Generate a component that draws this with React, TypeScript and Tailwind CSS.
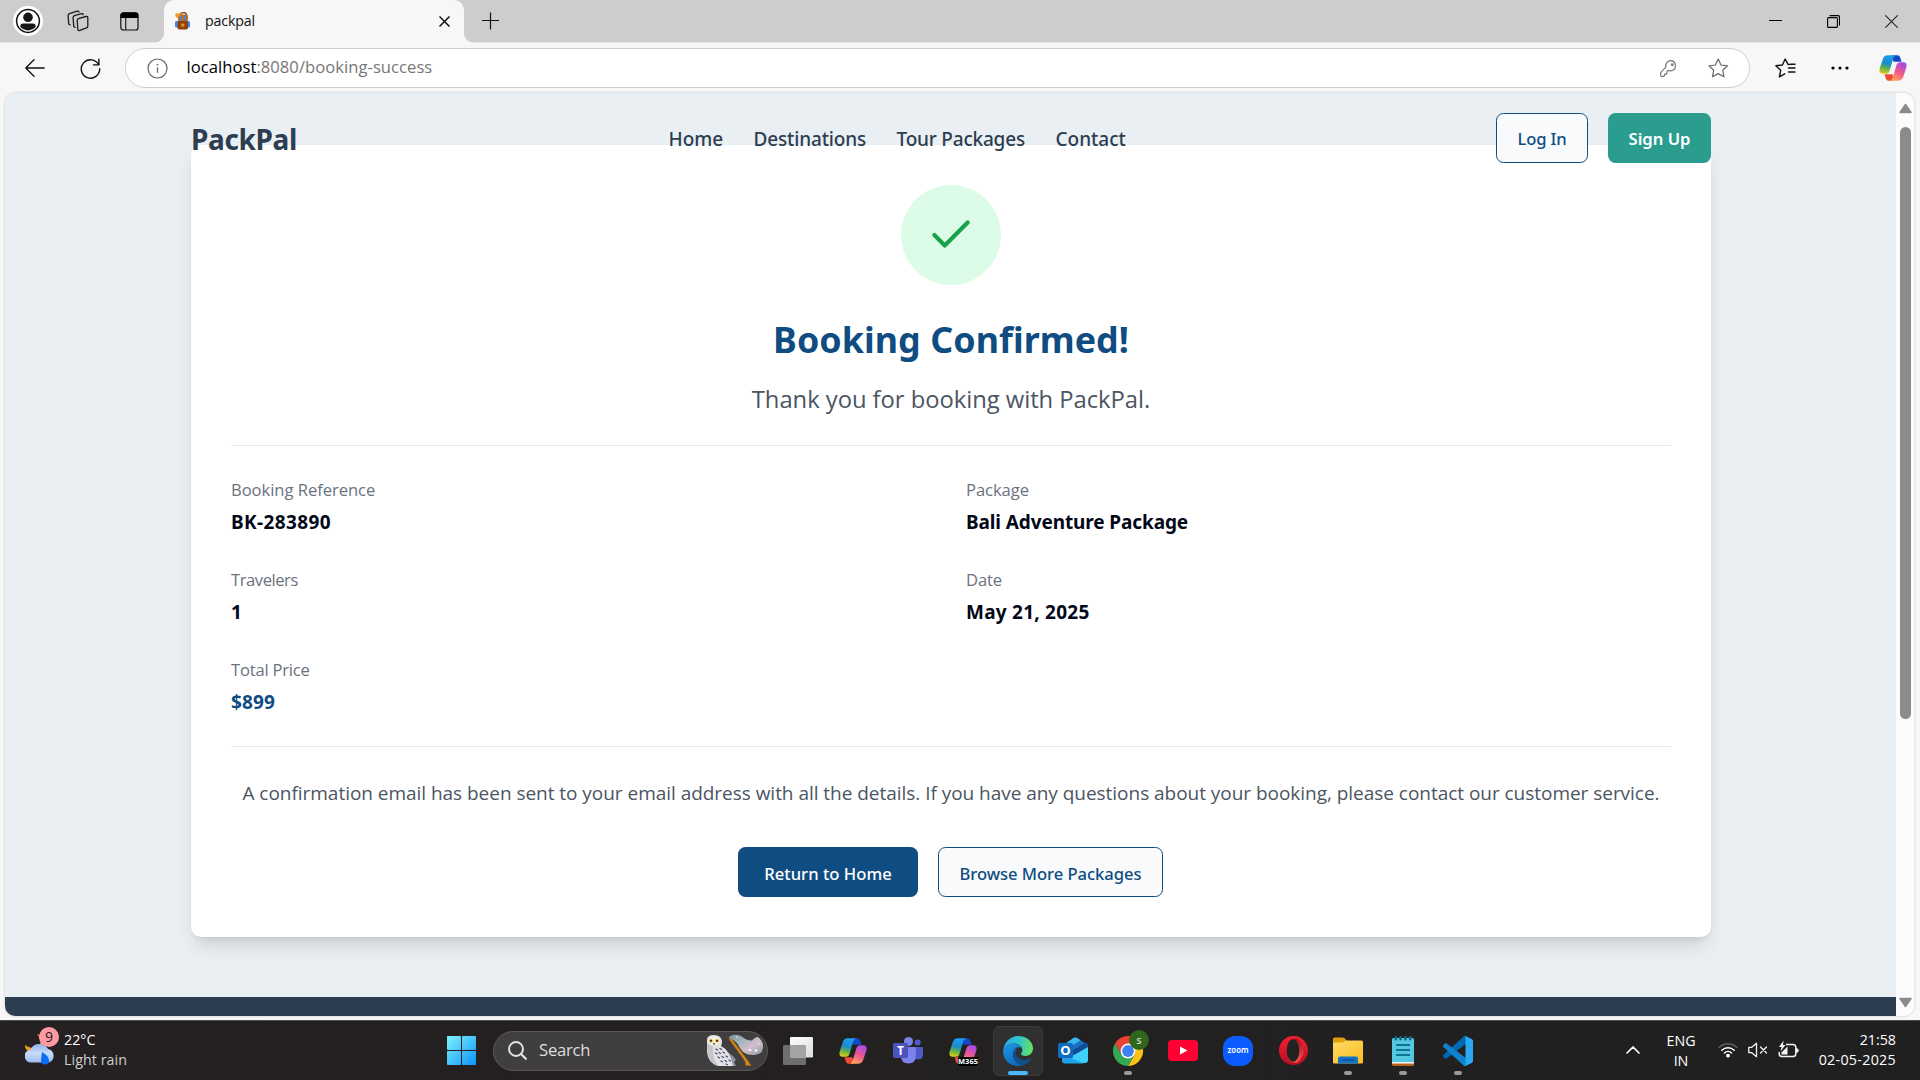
import type { ReactNode } from "react";

/* ---------- browser chrome icons ---------- */

function ProfileIcon() {
  return (
    <svg width="30" height="30" viewBox="0 0 30 30">
      <circle cx="15" cy="15" r="15" fill="#fff" />
      <circle cx="15" cy="15" r="11.4" fill="#fff" stroke="#111" strokeWidth="1.5" />
      <circle cx="15" cy="11.3" r="4.8" fill="#161616" />
      <path d="M7.2 20.4c0-1.9 1.2-2.9 2.9-2.9h9.8c1.7 0 2.9 1 2.9 2.9a9.6 9.6 0 0 1-15.6 0z" fill="#161616" />
    </svg>
  );
}

function WorkspacesIcon() {
  return (
    <svg width="22" height="22" viewBox="0 0 22 22" fill="none" stroke="#1d1d1d" strokeWidth="1.3" strokeLinejoin="round" strokeLinecap="round">
      <path d="M11.4 8.6 19 6.5q1.8-.4 1.8 1.3v8.4q0 1.2-1.2 1.6l-6.8 2.6q-1.7.5-2-1l-.6-8.700q0-1.600 1.200-2.100z" />
      <path d="M16.200 4.600q-.3-1.200-1.600-.9L7.500 5.700q-1.500.5-1.400 2l.6 8.500q.2 1.200 1.400 1.200" />
      <path d="M12 2q-.4-1.200-1.700-.8L2.400 3.700Q1 4.200 1.100 5.700l.6 8q.2 1.200 1.500 1.200" />
    </svg>
  );
}

function TabActionsIcon() {
  return (
    <svg width="19" height="19" viewBox="0 0 19 19">
      <rect x="0.8" y="0.8" width="17.2" height="17.2" rx="2.6" fill="none" stroke="#111" strokeWidth="1.2" />
      <path d="M.5 6V3.300A2.800 2.800 0 0 1 3.300.5h12.200a2.800 2.800 0 0 1 2.800 2.800V6z" fill="#000" />
      <path d="M5.700 6v12" stroke="#111" strokeWidth="1.1" />
    </svg>
  );
}

function BackpackIcon() {
  return (
    <svg width="16" height="18" viewBox="0 0 16 18">
      <rect x="0" y="9" width="15" height="6.5" rx="1.5" fill="#3f8ae8" />
      <path d="M5.500 3Q5.500.6 8.500.6t3 2.400" fill="none" stroke="#8a4513" strokeWidth="1.3" />
      <rect x="3" y="2.500" width="10" height="7" rx="1.500" fill="#c06a24" />
      <rect x="4.800" y="3.500" width="1.800" height="5" fill="#3f86e0" />
      <rect x="9.400" y="3.500" width="1.800" height="5" fill="#3f86e0" />
      <rect x="2.500" y="9" width="10.500" height="8.600" rx="1.800" fill="#8c400d" />
      <rect x="6" y="11.500" width="3.400" height="3.200" rx="1" fill="#e58a1d" />
      <path d="M0 2.500 2 1l1.500 1L5 .6l.5 2.200-2 2.200L1.500 6z" fill="#f79a1c" />
    </svg>
  );
}

function CopilotIcon({ id }: { id: string }) {
  return (
    <svg width="28" height="26" viewBox="0 0 28 26">
      <defs>
        <linearGradient id={id + "a"} x1=".3" y1="0" x2=".1" y2="1">
          <stop offset="0" stopColor="#1c9cf0" />
          <stop offset=".4" stopColor="#1b8bc9" />
          <stop offset=".68" stopColor="#66b447" />
          <stop offset="1" stopColor="#f7cf12" />
        </linearGradient>
        <linearGradient id={id + "b"} x1=".7" y1="0" x2=".3" y2="1">
          <stop offset="0" stopColor="#a54bea" />
          <stop offset=".5" stopColor="#ee5590" />
          <stop offset="1" stopColor="#ffa45c" />
        </linearGradient>
      </defs>
      <path d="M13 .3h5.500q2 0 2.700 2.300l1.300 4.200h-8z" fill="#1548c8" />
      <path d="M15 25.700H9.500q-2 0-2.700-2.300l-1.300-4.200h8z" fill="#ee4a35" />
      <path d="M9 .3h8q-2 .8-2.700 3.200l-3.900 12.800q-.8 2.500-3.300 2.500H3.600Q-.5 18.800.7 13.400L3.900 3.700Q5.200.3 9 .3z" fill={"url(#" + id + "a)"} />
      <path d="M19 25.700h-8q2-.8 2.700-3.200L17.600 9.700q.8-2.500 3.300-2.500h3.500q4.100 0 2.900 5.400l-3.200 9.700q-1.300 3.400-5.100 3.400z" fill={"url(#" + id + "b)"} />
    </svg>
  );
}

/* ---------- taskbar icons ---------- */

function WeatherIcon() {
  return (
    <svg width="36" height="38" viewBox="0 0 36 38">
      <defs>
        <linearGradient id="cloud" x1="0" y1="0" x2="0" y2="1">
          <stop offset="0" stopColor="#8fb4ee" />
          <stop offset=".5" stopColor="#c9dafa" />
          <stop offset="1" stopColor="#9dbbf0" />
        </linearGradient>
      </defs>
      <path d="M12 7q6 7 2 12T0 18q0 6 6 7l12-3 2-10Q18 9 12 7z" fill="#f49b1d" />
      <path d="M6.500 35.500a6.500 6.500 0 0 1-.8-13Q8 17 14 17q6.500 0 9 5a7 7 0 0 1 .8 13.500z" fill="url(#cloud)" />
      <path d="M17 25q7 4 7 8.500a4 4 0 0 1-8 0z" fill="#0a6cf5" />
      <circle cx="24" cy="10" r="10" fill="#ff99a4" />
      <text x="24" y="15" textAnchor="middle" fontFamily="Open Sans, sans-serif" fontSize="14" fill="#1b1b1b">9</text>
    </svg>
  );
}

function WindowsIcon() {
  return (
    <svg width="29" height="29" viewBox="0 0 29 29">
      <defs>
        <linearGradient id="win" gradientUnits="userSpaceOnUse" x1="0" y1="0" x2="29" y2="29">
          <stop offset="0" stopColor="#7df3ff" />
          <stop offset=".5" stopColor="#45c3fb" />
          <stop offset="1" stopColor="#0a93ff" />
        </linearGradient>
      </defs>
      <g fill="url(#win)">
        <rect x="0" y="0" width="14" height="14" rx=".8" />
        <rect x="15" y="0" width="14" height="14" rx=".8" />
        <rect x="0" y="15" width="14" height="14" rx=".8" />
        <rect x="15" y="15" width="14" height="14" rx=".8" />
      </g>
    </svg>
  );
}

function OwlAndBroom() {
  return (
    <svg width="58" height="33" viewBox="0 0 58 33">
      <defs>
        <linearGradient id="bristle" x1="0" y1="0" x2="1" y2="1">
          <stop offset="0" stopColor="#7e9497" />
          <stop offset=".4" stopColor="#a9bbbf" />
          <stop offset=".62" stopColor="#d6bccd" />
          <stop offset="1" stopColor="#86a09f" />
        </linearGradient>
      </defs>
      <path d="M20 17q8 5 10 9l-2 2 2 4h-9z" fill="#8b93a3" />
      <path d="M1 6Q1 1 8 1t8 6q0 4-1 5 9 4 12 20H12Q2 29 1 18z" fill="#e3e3e3" />
      <path d="M1 9q0 12 3 17 3 5 9 6Q6 26 7 13z" fill="#c4c5c9" />
      <ellipse cx="8" cy="7" rx="5.800" ry="4.600" fill="#f2f0ea" />
      <circle cx="5" cy="6.800" r="1.900" fill="#f2b31c" />
      <circle cx="11" cy="6.800" r="1.900" fill="#f2b31c" />
      <circle cx="5" cy="6.800" r="1" fill="#222" />
      <circle cx="11" cy="6.800" r="1" fill="#222" />
      <path d="m7 9 1 2.500L9 9z" fill="#3b3b3b" />
      <g fill="none" stroke="#4a4a86" strokeWidth="1.3" strokeLinecap="round">
        <path d="m10 15 1.500 1M14 14.500l1.500 1M9.500 19l1.500 1M13 18.500l1.500 1M17 18l1.500 1M12 23l1.500 1M16 22.500l1.500 1M20 22l1.500 1M15 27l1.500 1M19 26.500l1.500 1M23 26l1.500 1M20 30l1.500.8" />
      </g>
      <path d="M23 5 39 27l1 4.500h5L42 27 25 4z" fill="#d08a1e" stroke="#a8650d" strokeWidth=".8" />
      <path d="M23 3q5-4 12-1 6 5 11 4.500 3-4 6-3.500 5 4 5 9 0 7-5 8-4 1.500-10 .5-6-2-9-8Q30 6 23 4z" fill="url(#bristle)" />
      <g fill="#f4f8fa">
        <circle cx="44" cy="16" r="1.300" />
        <circle cx="50" cy="16.500" r="1.300" />
        <circle cx="31" cy="3" r=".8" />
        <circle cx="53" cy="10" r=".8" />
      </g>
    </svg>
  );
}

function TaskViewIcon() {
  return (
    <svg width="30" height="28" viewBox="0 0 30 28">
      <defs>
        <linearGradient id="tv" x1="0" y1="0" x2="1" y2="1">
          <stop offset="0" stopColor="#fff" />
          <stop offset="1" stopColor="#dcdcdc" />
        </linearGradient>
      </defs>
      <rect x="0" y="8" width="23" height="20" rx="1.200" fill="#6e6e6e" />
      <rect x="7" y="0" width="23" height="20.500" rx="1.200" fill="url(#tv)" />
      <path d="M7 8h14.800q1.200 0 1.200 1.200v11.300H8.200Q7 20.500 7 19.300z" fill="#a3a3a3" />
    </svg>
  );
}

function TeamsIcon() {
  return (
    <svg width="30" height="27" viewBox="0 0 30 27">
      <circle cx="24.700" cy="5.500" r="3" fill="#5059c9" />
      <path d="M21 10h7.700q1.300 0 1.300 1.300v6.500q0 4.500-4.500 4.500H21z" fill="#4f58c8" />
      <circle cx="15.500" cy="4.500" r="4.500" fill="#7b83eb" />
      <path d="M8 10h13.500q1.300 0 1.300 1.300V19q0 7.500-7.400 7.500T8 19z" fill="#7b83eb" />
      <rect x="0" y="6" width="15" height="15" rx="1.500" fill="#4b53bc" />
      <text x="7.500" y="17.500" textAnchor="middle" fontFamily="Open Sans, sans-serif" fontWeight="700" fontSize="11.500" fill="#fff">T</text>
    </svg>
  );
}

function EdgeIcon() {
  return (
    <svg width="30" height="30" viewBox="0 0 30 30">
      <defs>
        <linearGradient id="eg1" x1="0" y1=".4" x2="1" y2=".5">
          <stop offset="0" stopColor="#2aa8e8" />
          <stop offset=".5" stopColor="#2fc3cf" />
          <stop offset="1" stopColor="#66e45c" />
        </linearGradient>
        <linearGradient id="eg2" x1="0" y1="0" x2=".5" y2="1">
          <stop offset="0" stopColor="#1f97e0" />
          <stop offset="1" stopColor="#0d6bbf" />
        </linearGradient>
      </defs>
      <path d="M.2 14C1.300 6 7.500 0 15.300 0 24 0 30 6 30 12.500c0 4.500-3.500 7.500-7.500 7.500-3.500 0-4.700-1.400-4.500-2.400.3-.8 1.400-1.600 1.400-3.600C19.400 10.500 15.500 7.500 11 7.500 5 7.500 1.500 11 .2 14z" fill="url(#eg1)" />
      <path d="M.2 14C1.500 11 5 7.500 11 7.500c3.500 0 6.500 1.500 7.800 4C13.500 10.500 10 14.500 10 18.500 10 24 15 29 20 29c-1.500.7-3 1-5 1C6.500 30-.6 23 .2 14z" fill="url(#eg2)" />
      <path d="M10 18.500c0-3.500 2-7 5.300-7.800C12.800 13 12.300 16 13 18.500c1.500 4.500 7 7 14 4.200 1-.3 1.200.2.8.9C26 26.500 22.500 29 20 29 15 29 10 24 10 18.500z" fill="#144e91" />
    </svg>
  );
}

function OutlookIcon() {
  return (
    <svg width="30" height="27" viewBox="0 0 30 27">
      <path d="M4 9 16 .8q1.300-.8 2.600 0L30 8v4L16 20 4 16z" fill="#1a6fc4" />
      <path d="M6 7.500 16 .8q1.300-.8 2.600 0l4 2.500L12 10z" fill="#38b6f0" />
      <path d="m13 14 15-8.500L30 7v4L17 19z" fill="#124b94" />
      <path d="M30 10v13q0 3-3 3H12l-3-4z" fill="#3fd0fa" />
      <path d="M4 17l22 9.500H7q-3 0-3-3z" fill="#1fa4e8" />
      <rect x="0" y="6" width="15" height="15" rx="1.500" fill="#0f6cbd" />
      <text x="7.500" y="18" textAnchor="middle" fontFamily="Open Sans, sans-serif" fontWeight="700" fontSize="13" fill="#fff">O</text>
    </svg>
  );
}

function ChromeIcon() {
  return (
    <svg width="36" height="38" viewBox="0 0 36 38" className="ml-[6px] mt-[-8px]">
      <g transform="translate(0 8)">
        <path d="M2 7.500a15 15 0 0 1 26 0H15V15l-6.500 3.750z" fill="#ea4335" />
        <path d="M28 7.500A15 15 0 0 1 15 30l6.500-11.250L15 15V7.500z" fill="#fbc116" />
        <path d="M15 30A15 15 0 0 1 2 7.500l6.500 11.250L15 15l6.500 3.750z" fill="#34a853" />
        <circle cx="15" cy="15" r="7.400" fill="#fff" />
        <circle cx="15" cy="15" r="5.900" fill="#3b82f0" />
      </g>
      <circle cx="26" cy="12" r="9.900" fill="#2f661c" />
      <text x="26" y="16" textAnchor="middle" fontFamily="Open Sans, sans-serif" fontWeight="600" fontSize="11" fill="#c9d8c2">s</text>
    </svg>
  );
}

function YoutubeIcon() {
  return (
    <svg width="30" height="21" viewBox="0 0 30 21">
      <rect width="30" height="21" rx="4" fill="#ff0033" />
      <path d="m12 6.500 7.500 4-7.500 4z" fill="#fff" />
    </svg>
  );
}

function ZoomIcon() {
  return (
    <svg width="30" height="30" viewBox="0 0 30 30">
      <rect width="30" height="30" rx="12" fill="#0b5cff" />
      <text x="15" y="17.200" textAnchor="middle" fontFamily="Noto Sans, sans-serif" fontWeight="600" fontSize="8.500" textLength="21" lengthAdjust="spacingAndGlyphs" fill="#fff">zoom</text>
    </svg>
  );
}

function OperaIcon() {
  return (
    <svg width="29" height="29" viewBox="0 0 29 29">
      <defs>
        <linearGradient id="op" x1="0" y1="0" x2="0" y2="1">
          <stop offset="0" stopColor="#fa1e33" />
          <stop offset="1" stopColor="#b50f1f" />
        </linearGradient>
        <linearGradient id="op2" x1="0" y1="0" x2="0" y2="1">
          <stop offset="0" stopColor="#a3111f" />
          <stop offset="1" stopColor="#ff5252" />
        </linearGradient>
      </defs>
      <circle cx="14.500" cy="14.500" r="14.500" fill="url(#op)" />
      <path d="M9.500 5.200Q13 1.500 18 2.300a14.500 14.500 0 0 1 0 24.400q-5 .8-8.500-2.900z" fill="url(#op2)" />
      <ellipse cx="14" cy="14.500" rx="6.300" ry="11.300" fill="#232121" />
    </svg>
  );
}

function FolderIcon() {
  return (
    <svg width="30" height="27" viewBox="0 0 30 27">
      <defs>
        <linearGradient id="fo" x1="0" y1="0" x2="1" y2="1">
          <stop offset="0" stopColor="#ffdc66" />
          <stop offset="1" stopColor="#fbbb1e" />
        </linearGradient>
      </defs>
      <path d="M0 2Q0 .4 1.600.4h8q1 0 1.800.8L14 3.800V12H0z" fill="#e0a00c" />
      <path d="M0 5.500h10l3-2h15.500q1.500 0 1.500 1.500v20.500q0 1-1 1H1q-1 0-1-1z" fill="url(#fo)" />
      <path d="M5 26.500v-5q0-2 2-2h16q2 0 2 2v5z" fill="#1271c8" />
      <path d="M9 23h12.500" stroke="#0b4f93" strokeWidth="1.500" />
    </svg>
  );
}

function NotepadIcon() {
  return (
    <svg width="22" height="30" viewBox="0 0 22 30">
      <rect y="25" width="22" height="5" rx="1.200" fill="#b5601c" />
      <rect y="23" width="22" height="4.600" fill="#f2efec" />
      <path d="M0 3.600Q0 2 1.600 2h18.800Q22 2 22 3.600V26H0z" fill="#55c7e3" />
      <g fill="#0e6c86">
        <rect x="2.500" y="0" width="2.600" height="4.500" rx="1.300" />
        <rect x="7.300" y="0" width="2.600" height="4.500" rx="1.300" />
        <rect x="12.100" y="0" width="2.600" height="4.500" rx="1.300" />
        <rect x="16.900" y="0" width="2.600" height="4.500" rx="1.300" />
      </g>
      <path d="M4 9h14M4 14h14M4 19h14" stroke="#0f7391" strokeWidth="1.900" />
    </svg>
  );
}

function VSCodeIcon() {
  return (
    <svg width="30" height="30" viewBox="0 0 100 100">
      <path d="M96.460 10.800 75.860.880c-2.390-1.150-5.240-.670-7.110 1.200L1.300 63.580c-1.810 1.660-1.810 4.510 0 6.160l5.510 5.010c1.490 1.350 3.720 1.450 5.320.240l81.230-61.620c2.730-2.070 6.640-.120 6.640 3.300v-.240c0-2.400-1.380-4.590-3.540-5.630z" fill="#0068b4" />
      <path d="M96.460 89.200 75.860 99.120c-2.390 1.150-5.240.670-7.110-1.200L1.300 36.420c-1.810-1.660-1.810-4.510 0-6.160l5.510-5.010c1.490-1.350 3.720-1.450 5.320-.240l81.230 61.620c2.730 2.070 6.640.120 6.640-3.300v.240c0 2.400-1.380 4.590-3.540 5.630z" fill="#0f82cf" />
      <path d="M75.860 99.130c-2.390 1.150-5.240.660-7.110-1.210 2.310 2.310 6.250.670 6.250-2.590V4.670c0-3.260-3.940-4.900-6.250-2.590C70.620.210 73.470-.270 75.860.870l20.600 9.910c2.160 1.040 3.540 3.230 3.540 5.630v67.180c0 2.400-1.380 4.590-3.540 5.630z" fill="#2aa9f3" />
    </svg>
  );
}

function Tile({ children, active, dot }: { children: ReactNode; active?: boolean; dot?: boolean }) {
  return (
    <div className={active ? "relative flex h-[50px] w-[50px] items-center justify-center rounded-[6px] border border-[#3b3b3b] bg-[#303030]" : "relative flex h-[50px] w-[50px] items-center justify-center"}>
      {children}
      {active && <span className="absolute bottom-0 left-[14px] h-[4px] w-[20px] rounded-full bg-[#4cb8fb]" />}
      {dot && <span className="absolute bottom-[1px] left-[21px] h-[4px] w-[8px] rounded-full bg-[#999]" />}
    </div>
  );
}

/* ---------- page parts ---------- */

function Field({ label, value, labelClass, valueClass }: { label: string; value: string; labelClass: string; valueClass: string }) {
  return (
    <div className="h-[60px]">
      <p className={"mb-[5px] h-[25px] text-[16.6px] leading-[25px] text-[#6b7280] " + labelClass}>{label}</p>
      <p className={"h-[30px] font-['Noto_Sans',sans-serif] text-[19px] font-bold leading-[30px] " + valueClass}>{value}</p>
    </div>
  );
}

function TitleBar() {
  return (
    <div className="flex h-[43px] items-start border-b border-[#e6e6e6] bg-[#cdcdcd]">
      <div className="flex h-[42px] w-[164px] items-center pl-[13px]">
        <ProfileIcon />
        <div className="ml-[24px]"><WorkspacesIcon /></div>
        <div className="ml-[31px]"><TabActionsIcon /></div>
      </div>
      <div className="relative flex h-[43px] w-[300px] items-center rounded-t-[10px] bg-[#f7f7f7] pl-[11px]">
        <svg className="absolute -left-[10px] bottom-0" width="10" height="10"><path d="M10 0v10H0A10 10 0 0 0 10 0z" fill="#f7f7f7" /></svg>
        <svg className="absolute -right-[10px] bottom-0" width="10" height="10"><path d="M0 0v10h10A10 10 0 0 1 0 0z" fill="#f7f7f7" /></svg>
        <div className="mt-[-1px]"><BackpackIcon /></div>
        <span className="ml-[14px] mt-[-2px] flex-1 text-[14.2px] tracking-[-0.13px] text-[#111]">packpal</span>
        <svg className="mr-[14px]" width="11" height="11" viewBox="0 0 11 11"><path d="m.5.5 10 10m0-10-10 10" stroke="#111" strokeWidth="1.500" /></svg>
      </div>
      <svg className="ml-[18px] mt-[12px]" width="18" height="18" viewBox="0 0 18 18"><path d="M8.500.5v17M0 8.500h17" stroke="#111" strokeWidth="1.200" /></svg>
      <div className="ml-auto mr-[22px] mt-[15px] flex items-start">
        <svg width="13" height="13" viewBox="0 0 13 13"><path d="M0 5.500h13" stroke="#000" strokeWidth="1" /></svg>
        <svg className="ml-[45px]" width="13" height="13" viewBox="0 0 13 13" fill="none" stroke="#000" strokeWidth="1.100"><rect x=".6" y="2.600" width="9.800" height="9.800" rx="1" /><path d="M2.600.6H11q1.500 0 1.500 1.500V10.500" /></svg>
        <svg className="ml-[45px]" width="13" height="13" viewBox="0 0 13 13"><path d="m.3.3 12.400 12.400m0-12.400L.3 12.700" stroke="#222" strokeWidth="1.100" /></svg>
      </div>
    </div>
  );
}

const STAR = "m10.200 1 2.800 6 6.500.8-4.800 4.500 1.300 6.500-5.800-3.200-5.800 3.200 1.300-6.500L.9 7.800 7.400 7z";

function AddressBar() {
  return (
    <div className="flex h-[50px] items-center bg-[#f7f7f7]">
      <svg className="ml-[25px]" width="20" height="18" viewBox="0 0 20 18" fill="none" stroke="#111" strokeWidth="1.300" strokeLinecap="round" strokeLinejoin="round"><path d="M19.300 9H.8M9 .8.800 9 9 17.200" /></svg>
      <svg className="ml-[35px]" width="21" height="21" viewBox="0 0 21 21" fill="none" stroke="#111" strokeWidth="1.400" strokeLinecap="round" strokeLinejoin="round"><path d="M18.700 6.800A9.200 9.200 0 1 0 19.700 10.700M18.900 1.200v5.700h-5.500" /></svg>
      <div className="ml-[24px] flex h-[40px] w-[1625px] items-center rounded-full border border-[#cfcfcf] bg-white">
        <svg className="ml-[21px]" width="21" height="21" viewBox="0 0 21 21" fill="none"><circle cx="10.500" cy="10.500" r="9.500" stroke="#6a6a6a" strokeWidth="1.200" /><path d="M10.500 9.300v5.500" stroke="#6a6a6a" strokeWidth="1.300" /><circle cx="10.500" cy="6.700" r=".9" fill="#6a6a6a" /></svg>
        <span className="ml-[18.5px] mt-[-1px] text-[16.6px] tracking-[0.040px] text-[#767676]"><span className="text-black">localhost</span>:8080/booking-success</span>
        <svg className="ml-auto" width="17" height="17" viewBox="0 0 17 17" fill="none" stroke="#777" strokeWidth="1.200" strokeLinejoin="round"><path d="M11 .7a5.200 5.200 0 0 0-5.200 6.500L.9 12.300Q.6 12.600.6 13v2.300q0 1 1 1h2.200q.7 0 .7-.8v-1.300h1.700q.7 0 .7-.7v-1.800l1.400-1.300q1.200.4 2.700.4A5.100 5.100 0 0 0 11 .7z" /><circle cx="12.200" cy="4.700" r=".8" fill="#777" /></svg>
        <svg className="ml-[31px] mr-[20px]" width="21" height="20" viewBox="0 0 21 20" fill="none" stroke="#6a6a6a" strokeWidth="1.200" strokeLinejoin="round"><path d={STAR} /></svg>
      </div>
      <svg className="ml-[25px]" width="21" height="20" viewBox="0 0 21 20" fill="none" stroke="#111" strokeWidth="1.400" strokeLinejoin="round" strokeLinecap="round"><path d="M15.500 6.500 13 6.300l-2.800-5.300-2.800 6-6.500.8 4.800 4.500-1.300 6.500 5.300-3M13.500 10H20M13.500 14H20M15.500 6.300H20" /></svg>
      <svg className="ml-[35px]" width="18" height="4" viewBox="0 0 18 4"><circle cx="2" cy="2" r="1.600" /><circle cx="9" cy="2" r="1.600" /><circle cx="16" cy="2" r="1.600" /></svg>
      <div className="ml-[30px]"><CopilotIcon id="tb" /></div>
    </div>
  );
}

function SiteHeader() {
  return (
    <header className="absolute left-[186px] top-[20px] z-10 flex h-[50px] w-[1520px] items-center justify-between font-['Noto_Sans',sans-serif] font-medium">
      <div className="mt-[1px] w-[106px] whitespace-nowrap text-[28px] font-bold tracking-[-0.350px] text-[#2c3e50]">PackPal</div>
      <nav className="ml-[2px] mt-[2px] flex gap-[30px] whitespace-nowrap text-[19px] text-[#2c3e50]">
        <span className="w-[55px]">Home</span>
        <span className="w-[113px] tracking-[-0.150px]">Destinations</span>
        <span className="w-[129px] tracking-[-0.200px]">Tour Packages</span>
        <span className="w-[71px]">Contact</span>
      </nav>
      <div className="flex gap-[20px] text-[16.6px]">
        <button className="h-[50px] w-[92px] rounded-[7.5px] border border-[#0f4c81] bg-[#f9fafc] pt-[3px] tracking-[-0.150px] text-[#0f4c81]">Log In</button>
        <button className="h-[50px] w-[103px] rounded-[7.5px] bg-[#2a9d8f] pt-[3px] font-semibold text-white">Sign Up</button>
      </div>
    </header>
  );
}

function BookingCard() {
  return (
    <section className="ml-[186px] mt-[52px] flex h-[792px] w-[1520px] flex-col rounded-[10px] bg-white px-[40px] pt-[40px] shadow-[0_12px_19px_-4px_rgba(0,0,0,0.12),0_5px_8px_-5px_rgba(0,0,0,0.12)]">
      <div className="flex h-[100px] w-[100px] items-center justify-center self-center rounded-full bg-[#dcfce7]">
        <svg width="50" height="50" viewBox="0 0 24 24" fill="none" stroke="#16a34a" strokeWidth="2" strokeLinecap="round" strokeLinejoin="round"><path d="M20 6 9 17l-5-5" /></svg>
      </div>
      <h1 className="mt-[32px] h-[45px] text-center font-['Noto_Sans',sans-serif] text-[35.8px] font-bold leading-[45px] tracking-[0.060px] text-[#0f4c81]">Booking Confirmed!</h1>
      <p className="mt-[20px] h-[35px] text-center text-[23.8px] leading-[35px] tracking-[-0.040px] text-[#4b5563]">Thank you for booking with PackPal.</p>
      <div className="mt-[28px] grid h-[302px] grid-cols-2 content-start gap-[30px] border-y border-[#e5e7eb] pt-[31px]">
        <Field label="Booking Reference" value="BK-283890" labelClass="tracking-[-0.050px]" valueClass="text-[#020817] tracking-[0.380px]" />
        <Field label="Package" value="Bali Adventure Package" labelClass="tracking-[-0.070px]" valueClass="text-[#020817] tracking-[-0.110px]" />
        <Field label="Travelers" value="1" labelClass="tracking-[-0.450px]" valueClass="text-[#020817]" />
        <Field label="Date" value="May 21, 2025" labelClass="tracking-[-0.130px]" valueClass="text-[#020817] tracking-[0.240px]" />
        <Field label="Total Price" value="$899" labelClass="tracking-[-0.220px]" valueClass="text-[#0f4c81] tracking-[0.150px]" />
      </div>
      <p className="mt-[31px] h-[30px] whitespace-nowrap text-center text-[19px] leading-[30px] tracking-[-0.033px] text-[#4b5563]">
        A confirmation email has been sent to your email address with all the details. If you have any questions about your booking, please contact our customer service.
      </p>
      <div className="mt-[39px] flex justify-center gap-[20px] pr-[1px] font-['Noto_Sans',sans-serif] text-[16.6px] font-medium">
        <button className="h-[50px] w-[180px] rounded-[7.5px] bg-[#0f4c81] pt-[4px] tracking-[0.040px] text-white">Return to Home</button>
        <button className="h-[50px] w-[225px] whitespace-nowrap rounded-[7.5px] border border-[#0f4c81] bg-[#f9fafc] pt-[4px] tracking-[-0.040px] text-[#0f4c81]">Browse More Packages</button>
      </div>
    </section>
  );
}

function Scrollbar() {
  return (
    <div className="flex w-[18px] flex-col items-center bg-[#fcfcfc]">
      <svg className="mt-[10px]" width="13" height="11" viewBox="0 0 13 11"><path d="M6.500 1.500 12 9.500H1z" fill="#8b8b8b" stroke="#8b8b8b" strokeWidth="1.500" strokeLinejoin="round" /></svg>
      <div className="mt-[13px] h-[592px] w-[11px] rounded-full bg-[#8b8b8b]" />
      <svg className="mb-[8px] mt-auto" width="13" height="11" viewBox="0 0 13 11"><path d="M6.500 9.500 1 1.500h11z" fill="#8b8b8b" stroke="#8b8b8b" strokeWidth="1.500" strokeLinejoin="round" /></svg>
    </div>
  );
}

function Taskbar() {
  return (
    <footer className="flex h-[60px] items-center border-t border-[#4a4a4a] bg-gradient-to-r from-[#252021] via-[#232020] to-[#202020] text-[14.25px] text-white">
      <div className="flex w-[436px] items-center pl-[25px]">
        <div className="mt-[-9px]"><WeatherIcon /></div>
        <div className="ml-[3px] mt-[-2px] leading-[20px]">
          <div>22°C</div>
          <div className="tracking-[0.060px] text-[#cfcfcf]">Light rain</div>
        </div>
      </div>
      <Tile><WindowsIcon /></Tile>
      <div className="ml-[7px] mr-[5px] flex h-[40px] w-[275px] items-center rounded-full border border-[#5a5858] bg-[#403e3e] pl-[14px]">
        <svg width="19" height="19" viewBox="0 0 19 19" fill="none" stroke="#e4e4e4" strokeLinecap="round"><circle cx="8" cy="8" r="7" strokeWidth="1.900" /><path d="m13 13 4.800 4.800" strokeWidth="2.200" /></svg>
        <span className="ml-[12px] text-[16.6px] tracking-[-0.2px] text-[#dedede]">Search</span>
        <div className="ml-auto mr-[3px]"><OwlAndBroom /></div>
      </div>
      <div className="flex gap-[5px]">
        <Tile><TaskViewIcon /></Tile>
        <Tile><CopilotIcon id="c1" /></Tile>
        <Tile><TeamsIcon /></Tile>
        <Tile>
          <CopilotIcon id="c2" />
          <span className="absolute left-[20px] top-[31px] h-[9px] w-[20px] rounded-[2px] bg-black text-center text-[7.5px] font-bold leading-[9px] text-white">M365</span>
        </Tile>
        <Tile active><EdgeIcon /></Tile>
        <Tile><OutlookIcon /></Tile>
        <Tile dot><ChromeIcon /></Tile>
        <Tile><YoutubeIcon /></Tile>
        <Tile><ZoomIcon /></Tile>
        <Tile><OperaIcon /></Tile>
        <Tile dot><FolderIcon /></Tile>
        <Tile dot><NotepadIcon /></Tile>
        <Tile dot><VSCodeIcon /></Tile>
      </div>
      <div className="ml-auto mr-[24px] flex items-center leading-[20px]">
        <svg className="mt-[-2px]" width="14" height="8" viewBox="0 0 14 8" fill="none" stroke="#fff" strokeWidth="1.700" strokeLinecap="round" strokeLinejoin="round"><path d="m1 7 6-6 6 6" /></svg>
        <div className="ml-[26px] w-[30px] text-center"><div>ENG</div><div>IN</div></div>
        <svg className="ml-[22px] mt-[-1px]" width="20" height="16" viewBox="0 0 20 16" fill="none" strokeWidth="1.500" strokeLinecap="round">
          <path d="M1 5.500a12.600 12.600 0 0 1 18 0" stroke="#5f5f5f" />
          <path d="M3.800 8.300a8.700 8.700 0 0 1 12.400 0M6.500 11a5 5 0 0 1 7 0" stroke="#fff" />
          <circle cx="10" cy="13.700" r="1.900" fill="#fff" />
        </svg>
        <svg className="ml-[10px] mt-[-1px]" width="20" height="16" viewBox="0 0 20 16" fill="none" stroke="#f2f2f2" strokeWidth="1.300" strokeLinejoin="round" strokeLinecap="round"><path d="M.8 5.300h3L8.500 1.300v13.400L3.800 10.700h-3zM12.500 5l6 6m0-6-6 6" /></svg>
        <svg className="ml-[10px] mt-[-4px]" width="21" height="18" viewBox="0 0 21 18" fill="none">
          <path d="M8 4.500h7q2.800 0 2.800 2.800v6.400q0 2.800-2.800 2.800H4q-2.800 0-2.800-2.800V12" stroke="#f2f2f2" strokeWidth="1.500" />
          <path d="M18.500 8.500q1.800.3 1.800 2t-1.800 2z" fill="#f2f2f2" stroke="#f2f2f2" />
          <path d="M9.500 6.500v8H3.500v-2z" fill="#f2f2f2" />
          <path d="M5.500.5 1 7h2.500L2.500 11.500 7.500 5H5z" fill="#f2f2f2" />
        </svg>
        <div className="mt-[-2px] w-[97px] text-right"><div>21:58</div><div className="tracking-[0.3px]">02-05-2025</div></div>
      </div>
    </footer>
  );
}

export default function App() {
  return (
    <div className="flex h-[1080px] w-[1920px] flex-col overflow-hidden bg-[#f7f7f7] font-['Open_Sans','Noto_Sans',sans-serif]">
      <TitleBar />
      <AddressBar />
      <main className="relative mx-[5px] flex h-[923px] w-[1909px] shrink-0 overflow-hidden rounded-[10px] bg-[#eaeff3] shadow-[0_0_3px_rgba(0,0,0,0.2)]">
        <SiteHeader />
        <div className="flex w-[1891px] flex-col">
          <BookingCard />
          <div className="mt-auto h-[19px] shrink-0 bg-[#2c3e50]" />
        </div>
        <Scrollbar />
      </main>
      <div className="h-[4px] shrink-0" />
      <Taskbar />
    </div>
  );
}
